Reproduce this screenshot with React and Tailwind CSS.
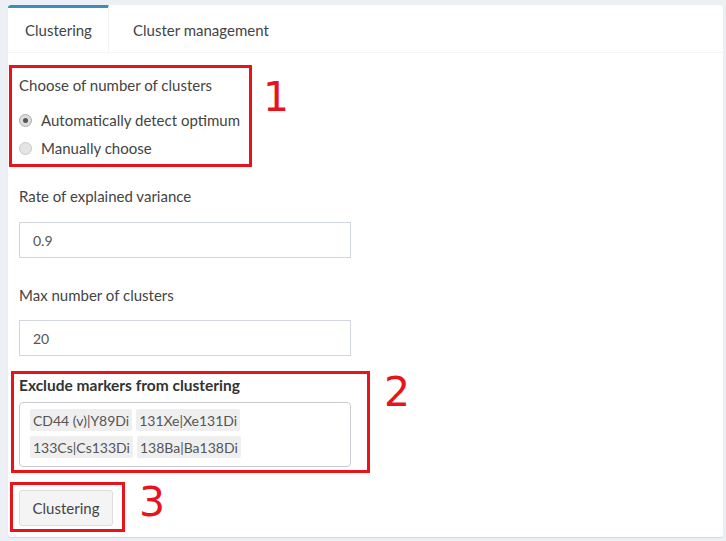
export default function App() {
  const font = { fontFamily: 'Lato, "Open Sans", sans-serif' };
  const digit = 'font-["DejaVu_Sans"] text-[41px] leading-none text-[#e8141c]';
  const tag = "h-[22px] px-[3px] bg-[#efefef] rounded-[2px] flex items-center";
  return (
    <div className="w-[726px] h-[541px] bg-[#ecf0f5] pt-[5px] pl-[8px] overflow-hidden" style={font}>
      <div className="w-[715px] h-[532px] bg-white rounded-[3px] shadow-[0_1px_1px_rgba(0,0,0,0.1)] flex flex-col">
        {/* Tabs */}
        <div className="flex h-[48px] border-b border-[#f4f4f4] shrink-0">
          <div className="w-[101px] border-t-[3px] border-[#3c8dbc] border-r border-r-[#f4f4f4] flex items-center pl-[17px] text-[15px] text-[#444] rounded-tl-[3px]">
            Clustering
          </div>
          <div className="pt-[3px] flex items-center pl-[24px] text-[15px] text-[#444]">
            Cluster management
          </div>
        </div>

        {/* Block 1 */}
        <div className="flex items-start gap-[11px] mt-[12px] ml-[1px]">
          <div className="w-[243px] h-[102px] border-[3px] border-[#e8141c] pl-[7px] pt-[8px] text-[15px] text-[#444]">
            <div className="leading-[18px]">Choose of number of clusters</div>
            <div className="mt-[12px] h-[28px] flex items-center gap-[9px]">
              <span className="w-[13px] h-[13px] rounded-full border border-[#aaa] bg-[#ddd] flex items-center justify-center">
                <span className="w-[5px] h-[5px] rounded-full bg-[#555]" />
              </span>
              <span>Automatically detect optimum</span>
            </div>
            <div className="h-[28px] flex items-center gap-[9px]">
              <span className="w-[13px] h-[13px] rounded-full border border-[#c8c8c8] bg-[#e4e4e4]" />
              <span>Manually choose</span>
            </div>
          </div>
          <div className={digit + " mt-[12px]"}>1</div>
        </div>

        {/* Inputs */}
        <div className="ml-[11px] mt-[20px] text-[15px] text-[#444] leading-[18px]">Rate of explained variance</div>
        <div className="ml-[11px] mt-[17px] w-[332px] h-[36px] border border-[#d2d6de] flex items-center pl-[13px] text-[14px] text-[#555]">0.9</div>
        <div className="ml-[11px] mt-[28px] text-[15px] text-[#444] leading-[18px]">Max number of clusters</div>
        <div className="ml-[11px] mt-[16px] w-[332px] h-[36px] border border-[#d2d6de] flex items-center pl-[13px] text-[14px] text-[#555]">20</div>

        {/* Block 2 */}
        <div className="flex items-start gap-[14px] mt-[15px] ml-[3px]">
          <div className="w-[359px] h-[102px] border-[3px] border-[#e8141c] pl-[5px] pt-[2px] text-[14px]">
            <div className="leading-[18px] text-[15.5px] font-bold text-[#333]">Exclude markers from clustering</div>
            <div className="mt-[8px] w-[332px] h-[65px] border border-[#c8ccd2] rounded-[4px] pl-[10px] pt-[6px] flex flex-col gap-[5px] text-[#555]">
              <div className="flex gap-[4px]">
                <span className={tag}>CD44 (v)|Y89Di</span>
                <span className={tag}>131Xe|Xe131Di</span>
              </div>
              <div className="flex gap-[4px]">
                <span className={tag}>133Cs|Cs133Di</span>
                <span className={tag}>138Ba|Ba138Di</span>
              </div>
            </div>
          </div>
          <div className={digit + " mt-[1px]"}>2</div>
        </div>

        {/* Block 3 */}
        <div className="flex items-start gap-[14px] mt-[9px] ml-[2px]">
          <div className="w-[115px] h-[50px] border-[3px] border-[#e8141c] pl-[6px] pt-[5px]">
            <div className="w-[94px] h-[36px] bg-[#f4f4f4] border border-[#ddd] rounded-[3px] flex items-center justify-center text-[15px] text-[#444]">
              Clustering
            </div>
          </div>
          <div className={digit + " mt-[0px]"}>3</div>
        </div>
      </div>
    </div>
  );
}
